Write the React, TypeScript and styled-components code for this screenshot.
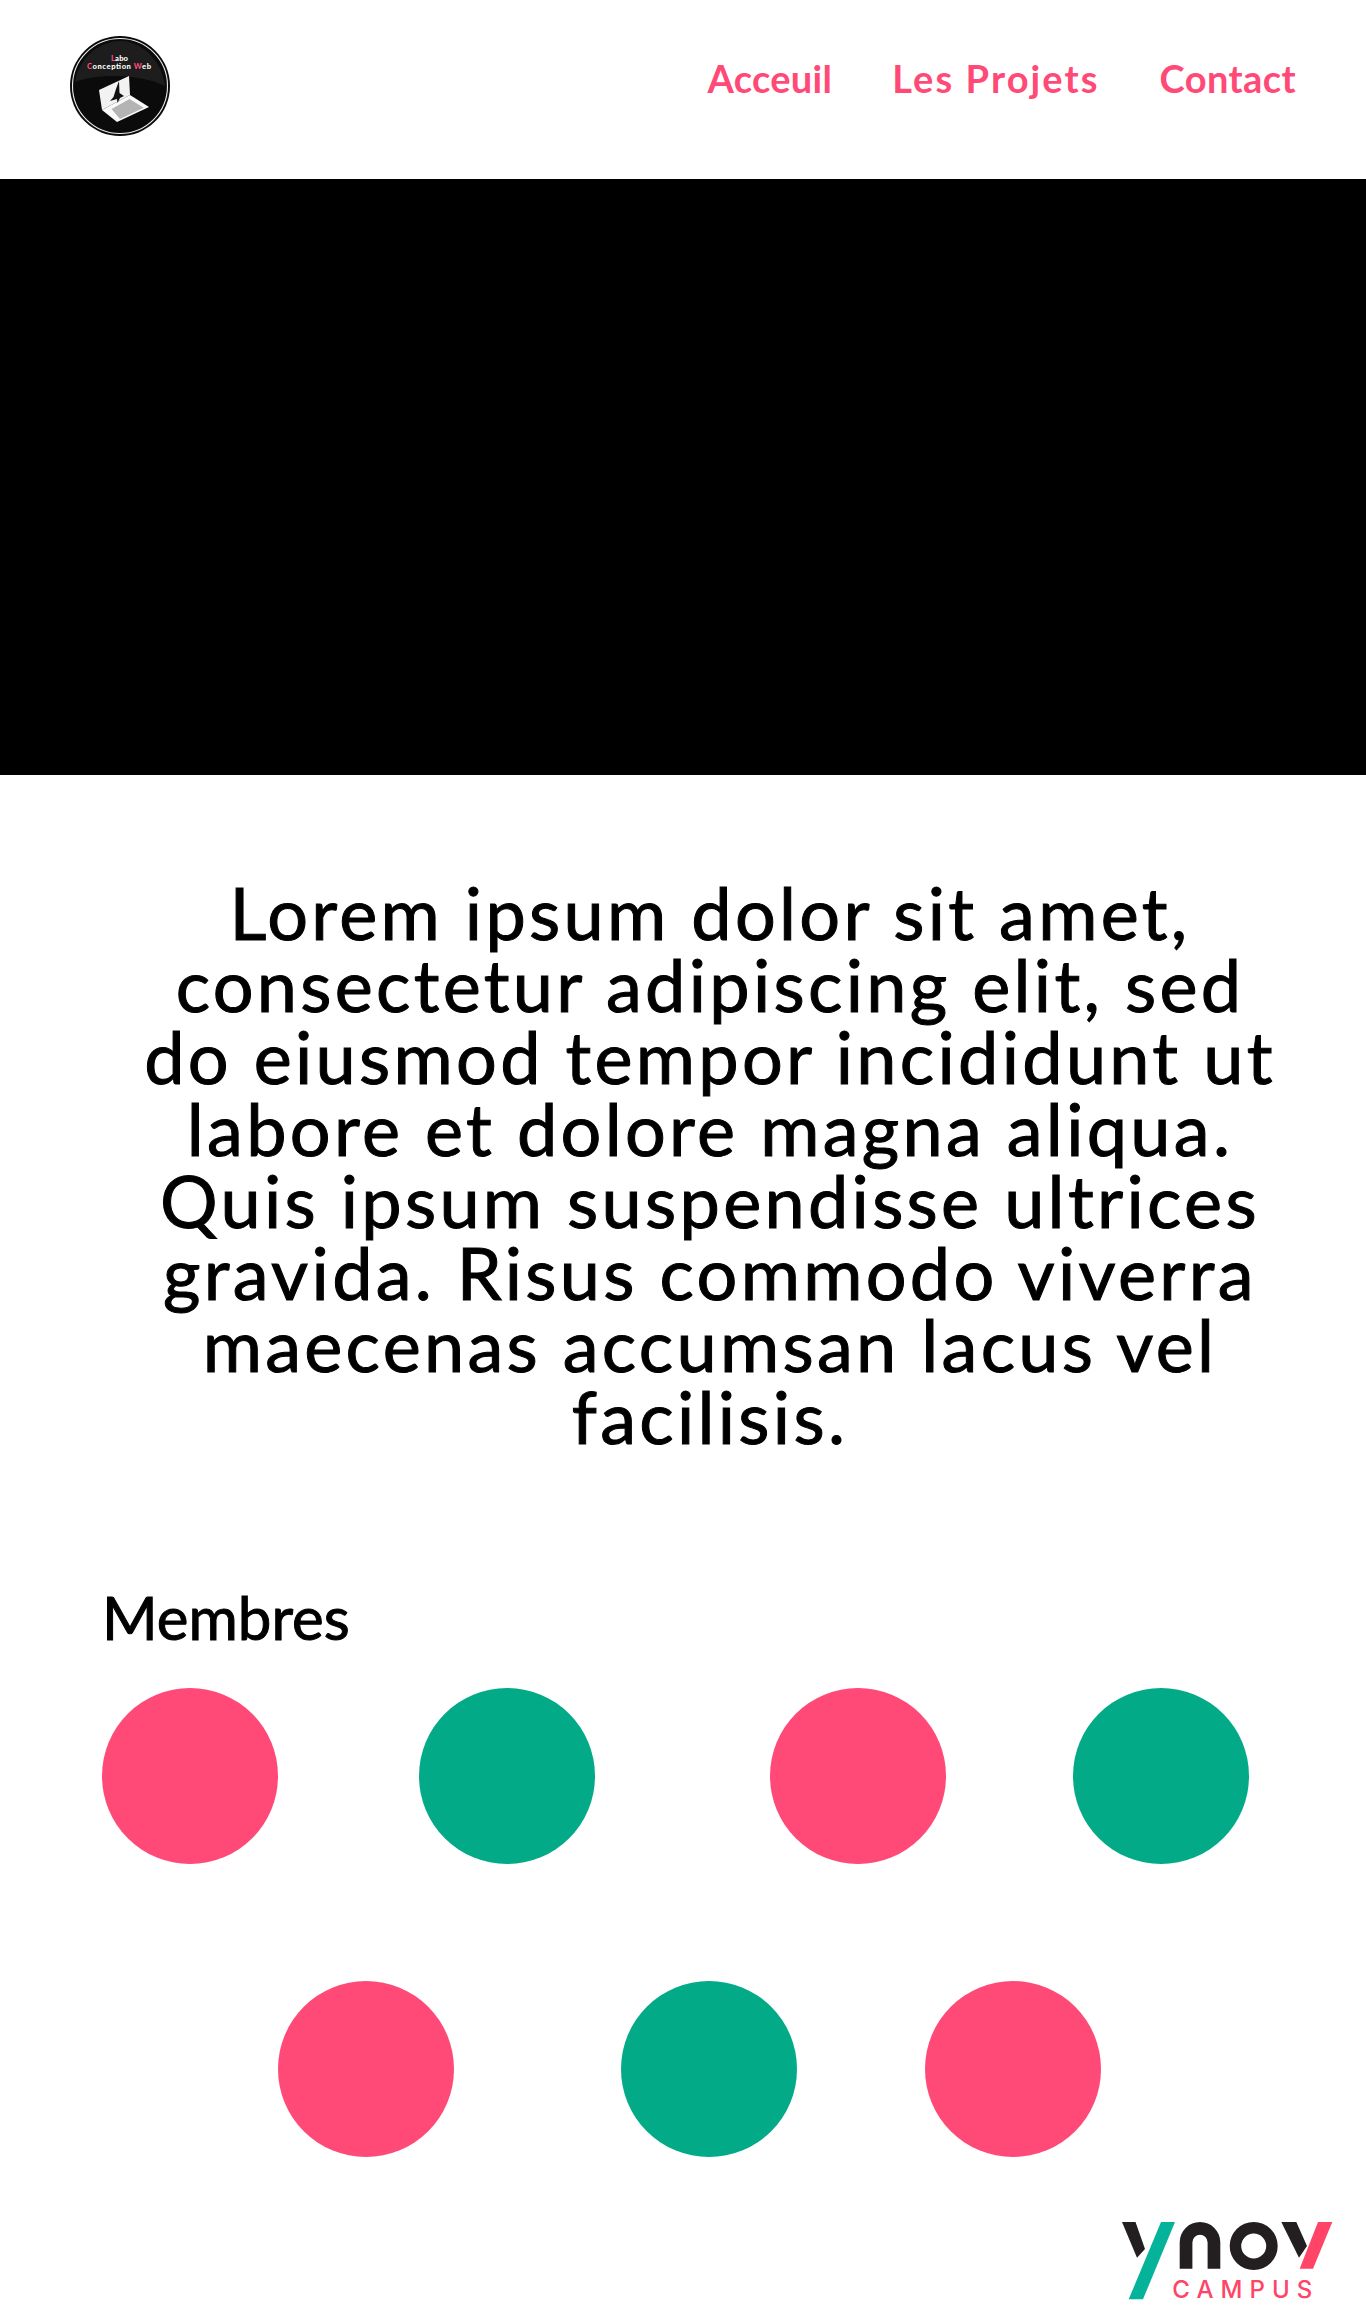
import React from "react";
import styled, { createGlobalStyle } from "styled-components";

const Global = createGlobalStyle`
  html, body { margin: 0; padding: 0; background: #fff; }
`;

const PINK = "#ff4a78";
const GREEN = "#03aa88";
const HAND = `"Lato", "Noto Sans", sans-serif`;

const Page = styled.div`
  width: 1366px;
  height: 2320px;
  overflow: hidden;
  background: #fff;
  font-family: ${HAND};
  color: #000;
`;
const Header = styled.header`
  height: 179px;
  display: flex;
  align-items: flex-start;
  justify-content: space-between;
  padding: 36px 70px 0 70px;
  box-sizing: border-box;
`;
const Nav = styled.nav`
  display: flex;
  gap: 60px;
  padding-top: 20px;
`;
const NavLink = styled.a<{ $tracking: number }>`
  color: ${PINK};
  font-size: 38px;
  line-height: 44px;
  font-weight: 700;
  letter-spacing: ${(p) => p.$tracking}px;
`;
const Hero = styled.div`
  height: 596px;
  background: #000;
`;
const Intro = styled.p`
  margin: 101px 0 0;
  padding-left: 54px;
  font-size: 72px;
  line-height: 72px;
  letter-spacing: 3.3px;
  text-align: center;
  -webkit-text-stroke: 1px #000;
`;
const IntroLine = styled.span`
  display: block;
  white-space: nowrap;
`;
const Members = styled.h2`
  margin: 131px 0 0 102px;
  font-size: 60px;
  line-height: 68px;
  font-weight: 400;
  -webkit-text-stroke: 1px #000;
`;
const Row = styled.div<{ $left: number; $top: number }>`
  display: flex;
  margin-left: ${(p) => p.$left}px;
  margin-top: ${(p) => p.$top}px;
`;
const Dot = styled.div<{ $color: string; $gap: number }>`
  width: 176px;
  height: 176px;
  border-radius: 50%;
  flex: none;
  background: ${(p) => p.$color};
  margin-left: ${(p) => p.$gap}px;
`;
const Foot = styled.footer`
  display: flex;
  justify-content: flex-end;
  padding: 65px 33px 0 0;
`;
const YnovLogo = styled.svg`
  display: block;
  width: 211px;
  height: 86px;
`;

const Logo = () => (
  <svg width="100" height="100" viewBox="0 0 100 100" aria-label="Labo Conception Web">
    <circle cx="50" cy="50" r="50" fill="#0b0b0b" />
    <path d="M5 46C28 37 72 38 95 50C92 24 72 5 50 5C28 5 8 24 5 46Z" fill="#1d1d1d" />
    <circle cx="50" cy="50" r="47.5" fill="none" stroke="#ececec" strokeWidth="1.1" />
    <g fontFamily="Lato, sans-serif" fontSize="7.6" fontWeight="900" fill="#fff">
      <text x="41" y="24.7" textLength="17"><tspan fill={PINK}>L</tspan>abo</text>
      <text x="17" y="32.7" textLength="64"><tspan fill={PINK}>C</tspan>onception <tspan fill={PINK}>W</tspan>eb</text>
    </g>
    <path d="M29 54L59 40L60 59L32 74Z" fill="#f2f2f2" />
    <path d="M32 74L60 59L79 71L47 86Z" fill="#fafafa" />
    <path d="M41.5 73L59.5 63L73.7 71.7L50 83Z" fill="#b4b4b4" />
    <path d="M49 45L46 53L43.5 61L40 65L47 63L47.5 67L50 62L54 60L49.5 57Z" fill="#111" />
  </svg>
);

const Ynov = () => (
  <YnovLogo viewBox="0 0 211 86" aria-label="ynov campus">
    <path d="M0 0H13.5L23 27L15 35.7Z" fill="#231f20" />
    <path d="M39 0H53L21 77.3H6.7Z" fill="#05b39a" />
    <path d="M57.7 46.7V20.3A20.3 20.3 0 0 1 98.3 20.3V46.7H85.6V20.3A7.6 7.6 0 0 0 70.4 20.3V46.7Z" fill="#231f20" />
    <path fillRule="evenodd" d="M131.7 0A24 24 0 1 0 131.7 48A24 24 0 1 0 131.7 0ZM131.7 11.5A12.5 12.5 0 1 1 131.7 36.5A12.5 12.5 0 1 1 131.7 11.5Z" fill="#231f20" />
    <path d="M159.3 0H174.3L185 24L177 35.7Z" fill="#231f20" />
    <path d="M196 0H210.3L191 46.7H177.7Z" fill="#ff4468" />
    <text x="50.3" y="76.3" fontFamily="Inter, sans-serif" fontSize="24" fontWeight="500" textLength="140" fill="#ff4468">CAMPUS</text>
  </YnovLogo>
);

const LINES = [
  "Lorem ipsum dolor sit amet,",
  "consectetur adipiscing elit, sed",
  "do eiusmod tempor incididunt ut",
  "labore et dolore magna aliqua.",
  "Quis ipsum suspendisse ultrices",
  "gravida. Risus commodo viverra",
  "maecenas accumsan lacus vel",
  "facilisis.",
];

export default function App() {
  return (
    <Page>
      <Global />
      <Header>
        <Logo />
        <Nav>
          <NavLink $tracking={0.3}>Acceuil</NavLink>
          <NavLink $tracking={2.1}>Les Projets</NavLink>
          <NavLink $tracking={0.4}>Contact</NavLink>
        </Nav>
      </Header>
      <Hero />
      <Intro>
        {LINES.map((l) => (
          <IntroLine key={l}>{l}</IntroLine>
        ))}
      </Intro>
      <Members>Membres</Members>
      <Row $left={102} $top={37}>
        <Dot $color={PINK} $gap={0} />
        <Dot $color={GREEN} $gap={141} />
        <Dot $color={PINK} $gap={175} />
        <Dot $color={GREEN} $gap={127} />
      </Row>
      <Row $left={278} $top={117}>
        <Dot $color={PINK} $gap={0} />
        <Dot $color={GREEN} $gap={167} />
        <Dot $color={PINK} $gap={128} />
      </Row>
      <Foot>
        <Ynov />
      </Foot>
    </Page>
  );
}
